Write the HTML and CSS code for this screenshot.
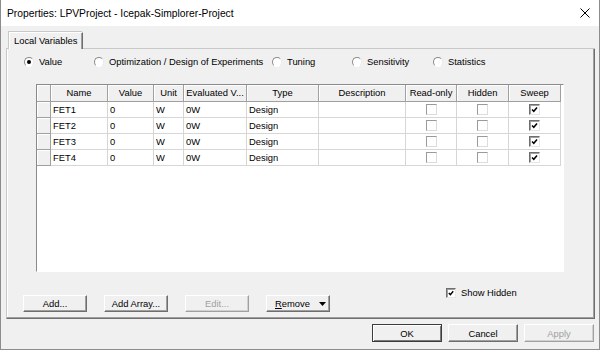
FILE: index.html
```html
<!DOCTYPE html>
<html>
<head>
<meta charset="utf-8">
<link rel="stylesheet" href="styles.css">
</head>
<body>
<div class="window">
  <div class="titlebar">
    <span class="title">Properties: LPVProject - Icepak-Simplorer-Project</span>
    <svg class="close" width="10" height="10" viewBox="0 0 10 10"><path d="M0.5 0.5 L9.5 9.5 M9.5 0.5 L0.5 9.5" stroke="#000" stroke-width="1" fill="none"/></svg>
  </div>
  <div class="content">
    <div class="tabrow">
      <div class="tabline-left"></div>
      <div class="tab">Local Variables</div>
      <div class="tabline-fill"></div>
    </div>
    <div class="panel">
      <div class="radios">
        <label class="radio"><span class="rb on"></span>Value</label>
        <label class="radio"><span class="rb"></span>Optimization / Design of Experiments</label>
        <label class="radio"><span class="rb"></span>Tuning</label>
        <label class="radio"><span class="rb"></span>Sensitivity</label>
        <label class="radio"><span class="rb"></span>Statistics</label>
      </div>
      <div class="grid">
        <div class="table">
          <div class="hc"></div>
          <div class="hc">Name</div>
          <div class="hc">Value</div>
          <div class="hc">Unit</div>
          <div class="hc">Evaluated V...</div>
          <div class="hc">Type</div>
          <div class="hc">Description</div>
          <div class="hc">Read-only</div>
          <div class="hc">Hidden</div>
          <div class="hc">Sweep</div>

          <div class="rh"></div><div class="c">FET1</div><div class="c">0</div><div class="c">W</div><div class="c">0W</div><div class="c">Design</div><div class="c"></div>
          <div class="c cc"><span class="cb"></span></div><div class="c cc"><span class="cb"></span></div><div class="c cc"><span class="cb on"><svg width="9" height="9" viewBox="0 0 9 9"><path d="M2 4.5 L3.8 6.3 L7 2.5" stroke="#000" stroke-width="1.5" fill="none"/></svg></span></div>

          <div class="rh"></div><div class="c">FET2</div><div class="c">0</div><div class="c">W</div><div class="c">0W</div><div class="c">Design</div><div class="c"></div>
          <div class="c cc"><span class="cb"></span></div><div class="c cc"><span class="cb"></span></div><div class="c cc"><span class="cb on"><svg width="9" height="9" viewBox="0 0 9 9"><path d="M2 4.5 L3.8 6.3 L7 2.5" stroke="#000" stroke-width="1.5" fill="none"/></svg></span></div>

          <div class="rh"></div><div class="c">FET3</div><div class="c">0</div><div class="c">W</div><div class="c">0W</div><div class="c">Design</div><div class="c"></div>
          <div class="c cc"><span class="cb"></span></div><div class="c cc"><span class="cb"></span></div><div class="c cc"><span class="cb on"><svg width="9" height="9" viewBox="0 0 9 9"><path d="M2 4.5 L3.8 6.3 L7 2.5" stroke="#000" stroke-width="1.5" fill="none"/></svg></span></div>

          <div class="rh"></div><div class="c">FET4</div><div class="c">0</div><div class="c">W</div><div class="c">0W</div><div class="c">Design</div><div class="c"></div>
          <div class="c cc"><span class="cb"></span></div><div class="c cc"><span class="cb"></span></div><div class="c cc"><span class="cb on"><svg width="9" height="9" viewBox="0 0 9 9"><path d="M2 4.5 L3.8 6.3 L7 2.5" stroke="#000" stroke-width="1.5" fill="none"/></svg></span></div>
        </div>
      </div>
      <div class="footer">
        <div class="btns">
          <button class="btn">Add...</button>
          <button class="btn">Add Array...</button>
          <button class="btn disabled">Edit...</button>
          <button class="btn remove"><span><u>R</u>emove</span><svg class="arrow" width="7" height="4" viewBox="0 0 7 4"><path d="M0 0 H7 L3.5 4 Z" fill="#000"/></svg></button>
        </div>
        <label class="showhidden"><span class="cb on dark"><svg width="8" height="8" viewBox="0 0 9 9"><path d="M2 4.5 L3.8 6.3 L7 2.5" stroke="#000" stroke-width="1.6" fill="none"/></svg></span>Show Hidden</label>
      </div>
    </div>
    <div class="dlgbtns">
      <button class="btn wide default">OK</button>
      <button class="btn wide">Cancel</button>
      <button class="btn wide disabled">Apply</button>
    </div>
  </div>
</div>
</body>
</html>
```

FILE: styles.css
```css
* { box-sizing: border-box; }
body {
  margin: 0;
  font-family: "Liberation Sans", Arial, sans-serif;
  font-size: 9.4px;
  color: #000;
}
.window {
  width: 600px;
  height: 350px;
  background: #f0f0f0;
  border: 1px solid #8c8c8c;
  border-top: none;
  display: flex;
  flex-direction: column;
}
.titlebar {
  height: 26px;
  background: #fff;
  display: flex;
  align-items: center;
  padding-left: 6px;
}
.title {
  font-size: 10.3px;
}
.close {
  margin-left: auto;
  margin-right: 9px;
}
.content {
  padding: 6px 4px 0 5px;
}
.tabrow {
  display: flex;
  height: 17px;
}
.tabline-left {
  width: 3px;
  border-bottom: 1px solid #c8c8c8;
}
.tabline-fill {
  flex: 1;
  border-bottom: 1px solid #c8c8c8;
}
.tab {
  height: 17px;
  padding: 0 5px 0 4px;
  border-top: 1px solid #fff;
  border-left: 1px solid #fff;
  border-right: 1px solid #6e6e6e;
  box-shadow: inset -1px 0 0 #a0a0a0, -1px -1px 0 #c8c8c8;
  line-height: 16px;
  white-space: nowrap;
}
.panel {
  height: 270px;
  border-left: 1px solid #c8c8c8;
  border-right: 1px solid #6e6e6e;
  border-bottom: 1px solid #6e6e6e;
  box-shadow: inset -1px -1px 0 #a0a0a0, inset 1px 0 0 #fff;
  display: flex;
  flex-direction: column;
}
.radios {
  margin-top: 6px;
  padding-left: 17px;
  display: grid;
  grid-template-columns: 70px 178px 80px 81px auto;
  height: 13px;
}
.radio {
  display: flex;
  align-items: center;
  gap: 5px;
  white-space: nowrap;
}
.rb {
  width: 10px;
  height: 10px;
  border-radius: 50%;
  border: 1px solid;
  border-color: #8a8a8a #eaeaea #fff #8a8a8a;
  background: #fff;
  display: flex;
  align-items: center;
  justify-content: center;
  flex: none;
}
.rb.on::after {
  content: "";
  width: 4px;
  height: 4px;
  border-radius: 50%;
  background: #000;
}
.grid {
  margin: 16px 0 0 29px;
  width: 528px;
  height: 188px;
  background: #fff;
  border: 1px solid;
  border-color: #8a8a8a #fff #fff #8a8a8a;
}
.table {
  display: grid;
  grid-template-columns: 14px 57px 46px 30px 63px 72px 87px 51px 52px 52px;
  grid-template-rows: 17px repeat(4, 16px);
}
.hc, .rh {
  background: #f0f0f0;
  border-right: 1px solid #a0a0a0;
  border-bottom: 1px solid #a0a0a0;
  box-shadow: inset 1px 1px 0 #fff;
}
.hc {
  text-align: center;
  line-height: 16px;
  white-space: nowrap;
  overflow: hidden;
}
.c {
  border-right: 1px solid #d6d6d6;
  border-bottom: 1px solid #d6d6d6;
  padding-left: 2px;
  line-height: 15px;
  white-space: nowrap;
}
.cc {
  display: flex;
  align-items: center;
  justify-content: center;
  padding-left: 0;
}
.cb {
  width: 11px;
  height: 11px;
  border: 1px solid;
  border-color: #9a9a9a #dcdcdc #dcdcdc #9a9a9a;
  background: #fff;
  display: flex;
  align-items: center;
  justify-content: center;
  flex: none;
}
.cb.on {
  border-color: #6e6e6e #e6e6e6 #e6e6e6 #6e6e6e;
  box-shadow: inset 1px 1px 0 #a0a0a0;
}
.cb.dark {
  width: 10px;
  height: 10px;
}
.footer {
  display: flex;
  align-items: flex-start;
  padding-left: 16px;
}
.btns {
  display: flex;
  gap: 17px;
  margin-top: 23px;
}
.btn {
  width: 64px;
  height: 17px;
  padding: 0;
  font: inherit;
  color: #000;
  background: #f0f0f0;
  border: 1px solid;
  border-color: #fff #6e6e6e #6e6e6e #fff;
  box-shadow: inset -1px -1px 0 #a0a0a0;
  display: flex;
  align-items: center;
  justify-content: center;
}
.btn.disabled {
  color: #a0a0a0;
  border-color: #fff #a0a0a0 #a0a0a0 #fff;
  box-shadow: inset -1px -1px 0 #d0d0d0;
}
.btn.remove {
  justify-content: flex-start;
  padding-left: 8px;
  gap: 9px;
}
.arrow { flex: none; }
.showhidden {
  margin-top: 15px;
  margin-left: 116px;
  display: flex;
  align-items: center;
  gap: 5px;
}
.dlgbtns {
  display: flex;
  justify-content: flex-end;
  gap: 6px;
  margin-top: 5px;
  padding-right: 1px;
}
.btn.wide {
  width: 70px;
  height: 18px;
}
.btn.default {
  border: 1px solid #3c3c3c;
  box-shadow: inset 1px 1px 0 #fff, inset -1px -1px 0 #7a7a7a;
}
```
